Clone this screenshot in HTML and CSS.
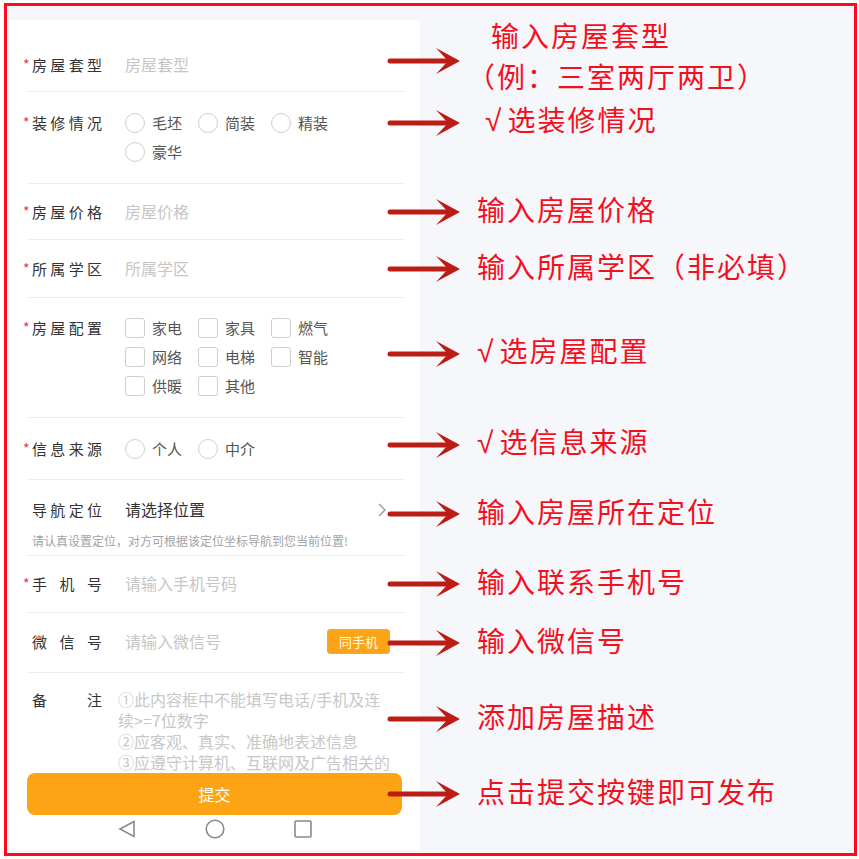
FILE: index.html
```html
<!DOCTYPE html>
<html lang="zh-CN">
<head>
    <meta charset="UTF-8">
    <meta name="viewport" content="width=device-width, initial-scale=1.0">
    <title>发布房源 - 填写说明</title>
    <link rel="stylesheet" href="styles.css">
</head>
<body>
    <div class="frame">
        <div class="phone">
            <form class="form">
                <div class="row row-type">
                    <div class="label"><i>*</i><span>房屋套型</span></div>
                    <div class="value placeholder">房屋套型</div>
                    <div class="note note-up">
                        <svg class="arrow" viewBox="0 0 74 28"><line x1="3" y1="14" x2="62" y2="14"/><path d="M73 14 L49 1 L61 14 L49 27 Z"/></svg>
                        <p class="note-two"><span class="indent">输入房屋套型</span><span class="outdent">（例：三室两厅两卫）</span></p>
                    </div>
                </div>

                <div class="row row-finish">
                    <div class="label"><i>*</i><span>装修情况</span></div>
                    <div class="options">
                        <label class="opt"><span class="radio"></span>毛坯</label>
                        <label class="opt"><span class="radio"></span>简装</label>
                        <label class="opt"><span class="radio"></span>精装</label>
                        <label class="opt"><span class="radio"></span>豪华</label>
                    </div>
                    <div class="note note-first">
                        <svg class="arrow" viewBox="0 0 74 28"><line x1="3" y1="14" x2="62" y2="14"/><path d="M73 14 L49 1 L61 14 L49 27 Z"/></svg>
                        <p class="ticked"><span class="tick">√</span>选装修情况</p>
                    </div>
                </div>

                <div class="row row-price">
                    <div class="label"><i>*</i><span>房屋价格</span></div>
                    <div class="value placeholder">房屋价格</div>
                    <div class="note">
                        <svg class="arrow" viewBox="0 0 74 28"><line x1="3" y1="14" x2="62" y2="14"/><path d="M73 14 L49 1 L61 14 L49 27 Z"/></svg>
                        <p>输入房屋价格</p>
                    </div>
                </div>

                <div class="row row-school">
                    <div class="label"><i>*</i><span>所属学区</span></div>
                    <div class="value placeholder">所属学区</div>
                    <div class="note">
                        <svg class="arrow" viewBox="0 0 74 28"><line x1="3" y1="14" x2="62" y2="14"/><path d="M73 14 L49 1 L61 14 L49 27 Z"/></svg>
                        <p>输入所属学区（非必填）</p>
                    </div>
                </div>

                <div class="row row-config">
                    <div class="label"><i>*</i><span>房屋配置</span></div>
                    <div class="options">
                        <label class="opt"><span class="check"></span>家电</label>
                        <label class="opt"><span class="check"></span>家具</label>
                        <label class="opt"><span class="check"></span>燃气</label>
                        <label class="opt"><span class="check"></span>网络</label>
                        <label class="opt"><span class="check"></span>电梯</label>
                        <label class="opt"><span class="check"></span>智能</label>
                        <label class="opt"><span class="check"></span>供暖</label>
                        <label class="opt"><span class="check"></span>其他</label>
                    </div>
                    <div class="note note-up">
                        <svg class="arrow" viewBox="0 0 74 28"><line x1="3" y1="14" x2="62" y2="14"/><path d="M73 14 L49 1 L61 14 L49 27 Z"/></svg>
                        <p><span class="tick">√</span>选房屋配置</p>
                    </div>
                </div>

                <div class="row row-source">
                    <div class="label"><i>*</i><span>信息来源</span></div>
                    <div class="options">
                        <label class="opt"><span class="radio"></span>个人</label>
                        <label class="opt"><span class="radio"></span>中介</label>
                    </div>
                    <div class="note note-up">
                        <svg class="arrow" viewBox="0 0 74 28"><line x1="3" y1="14" x2="62" y2="14"/><path d="M73 14 L49 1 L61 14 L49 27 Z"/></svg>
                        <p><span class="tick">√</span>选信息来源</p>
                    </div>
                </div>

                <div class="row row-nav">
                    <div class="line">
                        <div class="label"><i></i><span>导航定位</span></div>
                        <div class="value">请选择位置</div>
                        <svg class="chevron" viewBox="0 0 10 14"><polyline points="2,1 8,7 2,13"/></svg>
                    </div>
                    <p class="hint">请认真设置定位，对方可根据该定位坐标导航到您当前位置!</p>
                    <div class="note note-up">
                        <svg class="arrow" viewBox="0 0 74 28"><line x1="3" y1="14" x2="62" y2="14"/><path d="M73 14 L49 1 L61 14 L49 27 Z"/></svg>
                        <p>输入房屋所在定位</p>
                    </div>
                </div>

                <div class="row row-phone">
                    <div class="label"><i>*</i><span>手机号</span></div>
                    <div class="value placeholder">请输入手机号码</div>
                    <div class="note">
                        <svg class="arrow" viewBox="0 0 74 28"><line x1="3" y1="14" x2="62" y2="14"/><path d="M73 14 L49 1 L61 14 L49 27 Z"/></svg>
                        <p>输入联系手机号</p>
                    </div>
                </div>

                <div class="row row-wechat">
                    <div class="label"><i></i><span>微信号</span></div>
                    <div class="value placeholder">请输入微信号</div>
                    <span class="same-btn">同手机</span>
                    <div class="note">
                        <svg class="arrow" viewBox="0 0 74 28"><line x1="3" y1="14" x2="62" y2="14"/><path d="M73 14 L49 1 L61 14 L49 27 Z"/></svg>
                        <p>输入微信号</p>
                    </div>
                </div>

                <div class="row row-remark">
                    <div class="label"><i></i><span>备注</span></div>
                    <div class="remark-text">
                        <p>①此内容框中不能填写电话/手机及连续&gt;=7位数字</p>
                        <p>②应客观、真实、准确地表述信息</p>
                        <p>③应遵守计算机、互联网及广告相关的</p>
                    </div>
                    <div class="note note-up">
                        <svg class="arrow" viewBox="0 0 74 28"><line x1="3" y1="14" x2="62" y2="14"/><path d="M73 14 L49 1 L61 14 L49 27 Z"/></svg>
                        <p>添加房屋描述</p>
                    </div>
                </div>
            </form>

            <div class="actions">
                <button class="submit" type="button">提交</button>
                <div class="note">
                    <svg class="arrow" viewBox="0 0 74 28"><line x1="3" y1="14" x2="62" y2="14"/><path d="M73 14 L49 1 L61 14 L49 27 Z"/></svg>
                    <p>点击提交按键即可发布</p>
                </div>
            </div>

            <nav class="navbar">
                <svg viewBox="0 0 20 20"><path d="M17 2.5 L3 10 L17 17.5 Z"/></svg>
                <svg viewBox="0 0 20 20"><circle cx="10" cy="10" r="8.8"/></svg>
                <svg viewBox="0 0 20 20"><rect x="2" y="2" width="16" height="16" rx="1"/></svg>
            </nav>
        </div>
    </div>
</body>
</html>
```

FILE: styles.css
```css
* {
    margin: 0;
    padding: 0;
    box-sizing: border-box;
}
body {
    font-family: "Noto Sans CJK SC", "Noto Sans", sans-serif;
    background: #fff;
}
.frame {
    width: 853px;
    height: 853px;
    margin: 3px 0 0 4px;
    border: 3px solid #fd0a22;
    background: #f6f7fb;
    padding: 14px 0 3px 1px;
}
.phone {
    width: 412px;
    height: 100%;
    background: #fff;
    padding-top: 18px;
    display: flex;
    flex-direction: column;
}
.row {
    position: relative;
    display: flex;
    align-items: flex-start;
    margin: 0 15px 0 19px;
    padding: 14px 0;
    border-bottom: 1px solid #eee;
    line-height: 29px;
}
.row-type { padding: 12px 0; }
.row-finish { padding: 16px 0 17px; }
.row-price { padding: 13px 0; }
.row-config { padding: 15px 0 17px; }
.row-source { padding: 16px 0; }
.row-nav {
    flex-direction: column;
    align-items: stretch;
    padding: 15px 0 6px;
}
.row-phone { padding: 13px 0 14px; }
.row-wechat { padding: 14px 0 16px; }
.row-remark {
    height: 100px;
    padding: 16px 0 0;
    border-bottom: none;
    line-height: 21px;
}
.label {
    display: flex;
    flex: none;
    margin-left: -4px;
    color: #333;
    font-size: 15px;
}
.label i {
    width: 9px;
    font-style: normal;
    font-size: 14px;
    color: #e8353b;
}
.label span {
    display: block;
    width: 70px;
    text-align: justify;
    text-align-last: justify;
}
.value {
    margin-left: 23px;
    font-size: 16px;
    color: #333;
}
.placeholder {
    color: #c6c6c6;
}
.options {
    display: flex;
    flex-wrap: wrap;
    width: 240px;
    margin-left: 23px;
    font-size: 15px;
    color: #555;
}
.opt {
    display: flex;
    align-items: center;
    margin-right: 16px;
}
.radio, .check {
    width: 20px;
    height: 20px;
    margin-right: 7px;
    border: 1px solid #cfcfcf;
    border-radius: 50%;
}
.check {
    border-radius: 3px;
}
.line {
    display: flex;
    align-items: center;
}
.chevron {
    width: 10px;
    height: 14px;
    margin-left: auto;
    margin-right: 18px;
    fill: none;
    stroke: #999;
    stroke-width: 1.4;
}
.hint {
    margin: 9px 0 0 5px;
    font-size: 12px;
    line-height: 16px;
    color: #a3a3a3;
}
.same-btn {
    margin: 2px 15px 0 auto;
    width: 63px;
    height: 25px;
    line-height: 23px;
    text-align: center;
    font-size: 13px;
    color: #fff8e6;
    background: #fca417;
    border: 1px solid #b8b2a6;
    border-radius: 3px;
}
.remark-text {
    width: 276px;
    margin-left: 16px;
    font-size: 16px;
    color: #c8c8c8;
}
.actions {
    position: relative;
    margin: 0 18px 0 19px;
}
.submit {
    display: block;
    width: 100%;
    height: 42px;
    border: none;
    border-radius: 8px;
    background: #fca414;
    color: #fff;
    font-family: inherit;
    font-size: 16px;
}
.navbar {
    display: flex;
    align-items: center;
    gap: 68px;
    height: 28px;
    padding-left: 109px;
}
.navbar svg {
    width: 20px;
    height: 20px;
    fill: none;
    stroke: #8a8a8a;
    stroke-width: 1.6;
}

/* callouts drawn over the screenshot */
.note {
    position: absolute;
    left: 360px;
    top: 0;
    bottom: 0;
    display: flex;
    align-items: center;
    white-space: nowrap;
}
.note-up {
    padding-bottom: 8px;
}
.note-first {
    bottom: auto;
    top: 16px;
    height: 29px;
}
.arrow {
    flex: none;
    width: 74px;
    height: 28px;
    margin-right: 16px;
}
.arrow line {
    stroke: #bb1c14;
    stroke-width: 5;
    stroke-linecap: round;
}
.arrow path {
    fill: #bb1c14;
}
.note p {
    margin-bottom: 6px;
    font-size: 28px;
    line-height: 36px;
    letter-spacing: 2px;
    color: #f3101e;
}
.note .note-two {
    margin-bottom: 10px;
    line-height: 41px;
}
.note .ticked {
    margin-left: 8px;
}
.indent {
    display: block;
    padding-left: 14px;
}
.outdent {
    display: block;
    margin-left: -10px;
}
.tick {
    margin-right: 6px;
    font-family: "Liberation Sans", sans-serif;
    font-size: 30px;
    letter-spacing: 0;
}
```
